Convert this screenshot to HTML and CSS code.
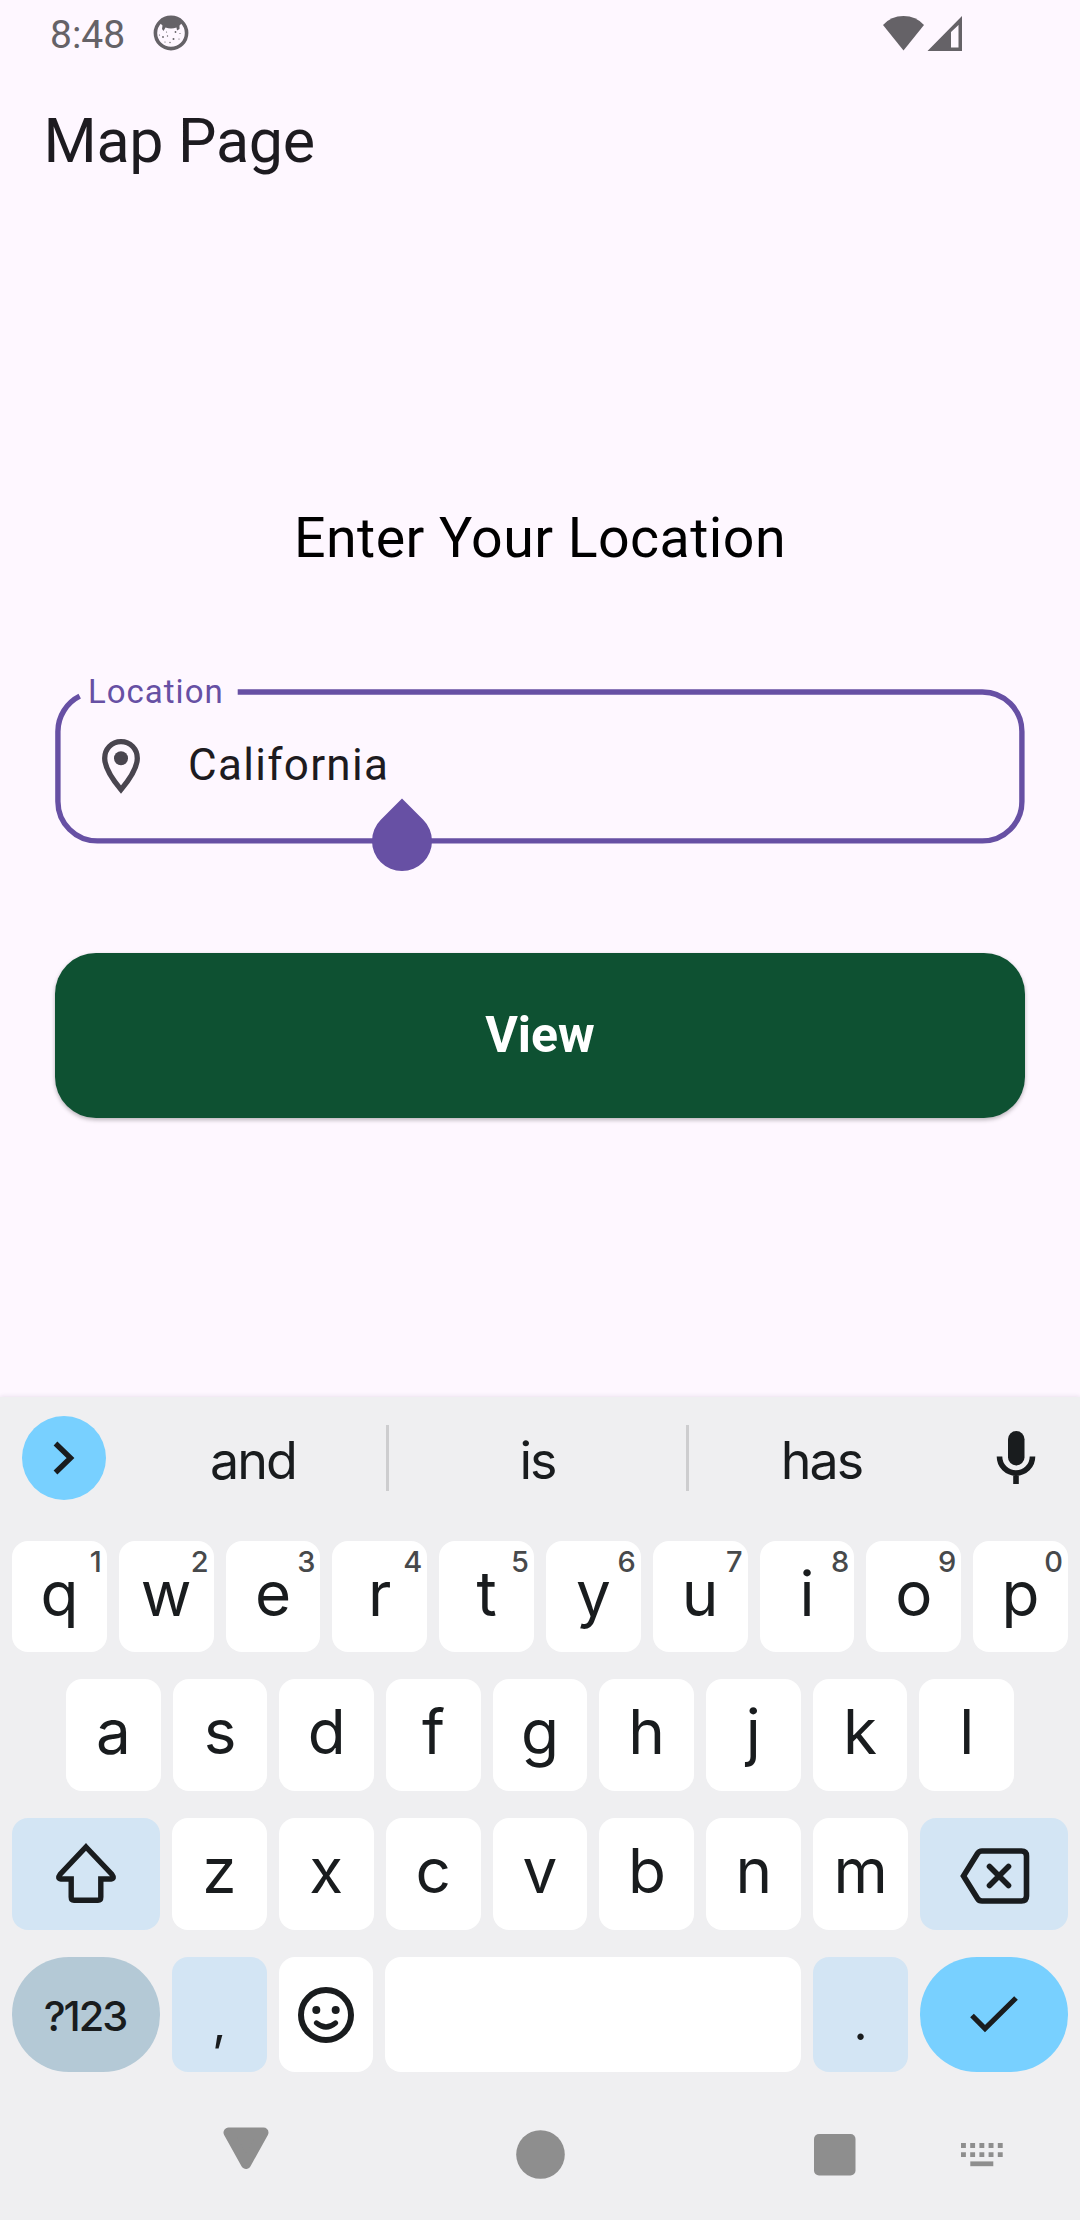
FILE: index.html

```html
<!DOCTYPE html>
<html lang="en">
<head>
<meta charset="utf-8">
<title>Map Page</title>
<link rel="stylesheet" href="styles.css">
</head>
<body>
<div class="screen">
  <header class="status">
    <span class="clock">8:48</span>
    <svg class="face" width="36" height="36" viewBox="0 0 36 36"><circle cx="18" cy="18" r="15.6" fill="none" stroke="currentColor" stroke-width="3.6"/><path d="M7 8Q18-2 29 8L26.5 10.5L26.5 14L24 15.5L23.5 12.5Q18 14.5 12.5 12.5L10.5 16L9 14L9.5 10.5Z" fill="currentColor"/><g fill="currentColor"><circle cx="10" cy="22" r=".9"/><circle cx="13.5" cy="17" r=".6"/><circle cx="22.5" cy="17" r=".9"/><circle cx="20.5" cy="24" r="1"/><circle cx="14.5" cy="21" r=".7"/><circle cx="26" cy="24" r=".6"/><circle cx="12" cy="27" r=".6"/><circle cx="17" cy="27.5" r=".7"/><circle cx="27" cy="18.5" r=".6"/><circle cx="6.5" cy="20" r=".6"/></g></svg>
    <svg class="signals" width="80" height="36" viewBox="0 0 80 36" fill="currentColor"><path d="M0 10Q8 1 20.5 1T41 10L20.5 35.500Z"/><path fill-rule="evenodd" d="M44.5 36L79 1V36ZM68 17V32.5H75.5V10Z"/></svg>
  </header>
  <h1 class="title">Map Page</h1>
  <main class="form">
    <h2 class="heading">Enter Your Location</h2>
    <div class="field">
      <svg class="outline" width="970" height="155" viewBox="0 0 970 155"><path d="M24.7 7.200A39.5 39.5 0 0 0 2.9 42.400V112.400A39.5 39.5 0 0 0 42.4 151.900H927.400A39.5 39.5 0 0 0 966.9 112.400V42.400A39.5 39.5 0 0 0 927.4 3H182.700" fill="none" stroke="currentColor" stroke-width="5.4"/></svg>
      <span class="label">Location</span>
      <svg class="pin" width="38" height="55" viewBox="0 0 38 55"><path d="M19 2.700C9.5 2.7 2.7 10 2.7 19.200C2.7 29 10.5 40.5 19 50.600C27.5 40.5 35.3 29 35.3 19.200C35.3 10 28.5 2.7 19 2.700Z" fill="none" stroke="currentColor" stroke-width="5.3"/><circle cx="19" cy="19.3" r="7" fill="currentColor"/></svg>
      <span class="value">California</span>
      <svg class="handle" width="60" height="74" viewBox="0 0 60 74"><path d="M30 .5L51.2 21.800A30 30 0 1 1 8.8 21.800Z" fill="currentColor"/></svg>
    </div>
    <button class="view">View</button>
  </main>
  <section class="keyboard">
    <div class="suggest">
      <span class="expand"><svg width="22" height="34" viewBox="0 0 22 34"><path d="M2.5 2.500L17.5 17L2.5 31.500" fill="none" stroke="currentColor" stroke-width="5.4"/></svg></span>
      <span class="word lead">and</span><i class="rule"></i><span class="word">is</span><i class="rule"></i><span class="word">has</span>
      <svg class="mic" width="40" height="54" viewBox="0 0 40 54"><rect x="12" y="0" width="16.5" height="34.5" rx="8.25" fill="currentColor"/><path d="M3.5 25.500C3.5 35 11 42 20 42S36.5 35 36.5 25.500M20 42V53" fill="none" stroke="currentColor" stroke-width="5.6"/></svg>
    </div>
    <div class="row first">
      <span class="key">q<sup>1</sup></span><span class="key">w<sup>2</sup></span><span class="key">e<sup>3</sup></span><span class="key">r<sup>4</sup></span><span class="key">t<sup>5</sup></span><span class="key">y<sup>6</sup></span><span class="key">u<sup>7</sup></span><span class="key">i<sup>8</sup></span><span class="key">o<sup>9</sup></span><span class="key">p<sup>0</sup></span>
    </div>
    <div class="row second">
      <span class="key">a</span><span class="key">s</span><span class="key">d</span><span class="key">f</span><span class="key">g</span><span class="key">h</span><span class="key">j</span><span class="key">k</span><span class="key">l</span>
    </div>
    <div class="row">
      <span class="key wide tint"><svg class="shift" width="62" height="61" viewBox="0 0 62 61"><path d="M31 4L57 31.500Q60 35.5 56 36H45.800V54Q45.8 57.2 43 57.200H19Q16.2 57.2 16.2 54V36H6Q2 35.5 5 31.500Z" fill="none" stroke="currentColor" stroke-width="5.4"/></svg></span>
      <span class="key">z</span><span class="key">x</span><span class="key">c</span><span class="key">v</span><span class="key">b</span><span class="key">n</span><span class="key">m</span>
      <span class="key wide tint"><svg class="erase" width="70" height="56" viewBox="0 0 70 56"><path d="M3.5 28L17.5 5.500Q19 3 22 3H61.500Q66.5 3 66.5 8V48Q66.5 53 61.5 53H22Q19 53 17.5 50.500Z" fill="none" stroke="currentColor" stroke-width="5.6"/><path d="M29.5 18.500L48.5 37.500M48.5 18.500L29.5 37.500" fill="none" stroke="currentColor" stroke-width="5.6" stroke-linecap="round"/></svg></span>
    </div>
    <div class="row last">
      <span class="key wide symbols">?123</span>
      <span class="key tint mark">,</span>
      <span class="key"><svg class="smile" width="56" height="56" viewBox="0 0 56 56"><circle cx="28" cy="28" r="25" fill="none" stroke="currentColor" stroke-width="6"/><circle cx="18.3" cy="23" r="4" fill="currentColor"/><circle cx="37.7" cy="23" r="4" fill="currentColor"/><path d="M18.5 36Q28 44 37.5 36" fill="none" stroke="currentColor" stroke-width="5.2" stroke-linecap="round"/></svg></span>
      <span class="key space"></span>
      <span class="key tint mark">.</span>
      <span class="key wide enter"><svg width="48" height="37" viewBox="0 0 48 37"><path d="M2 19.500L15 32.500L46 2" fill="none" stroke="currentColor" stroke-width="5.2"/></svg></span>
    </div>
    <nav class="nav">
      <svg class="back" width="48" height="43" viewBox="0 0 48 43"><path d="M6.5 5.500H41.500L24 37Z" fill="currentColor" stroke="currentColor" stroke-width="10" stroke-linejoin="round"/></svg>
      <svg class="home" width="49" height="49" viewBox="0 0 49 49"><circle cx="24.5" cy="24.5" r="24.3" fill="currentColor"/></svg>
      <svg class="recent" width="42" height="42" viewBox="0 0 42 42"><rect width="41.5" height="41.5" rx="5" fill="currentColor"/></svg>
      <svg class="switch" width="42" height="24" viewBox="0 0 42 24"><path d="M0 2.500H42M0 11.700H42" stroke="currentColor" stroke-width="4.8" stroke-dasharray="4.9 4.3"/><path d="M9.3 20.800H32.300" stroke="currentColor" stroke-width="4.8"/></svg>
    </nav>
  </section>
</div>
</body>
</html>
```

FILE: styles.css

```css
* { box-sizing: border-box; margin: 0; padding: 0; }
svg { display: block; flex: none; }
body { background: #fef7ff; }
.screen {
  width: 1080px; height: 2220px; display: flex; flex-direction: column;
  font-family: Roboto, sans-serif; color: #1d1b20; overflow: hidden;
}
.status { height: 69px; display: flex; align-items: center; padding: 0 117px 3px 50px; color: #656267; }
.clock { font-size: 39px; line-height: 69px; padding-top: 5px; width: 103px; }
.signals { margin-left: auto; }
.title { font-size: 61px; font-weight: 400; line-height: 144px; letter-spacing: -.3px; padding-left: 43.5px; }
.form { flex: 1; padding: 293px 55px 0; display: flex; flex-direction: column; }
.heading { font-size: 55.5px; font-weight: 400; line-height: 66px; letter-spacing: .45px; color: #000; text-align: center; }
.field { position: relative; height: 155px; margin-top: 117px; display: flex; align-items: center; padding-left: 47px; }
.outline { position: absolute; inset: 0; color: #6750a4; }
.label { position: absolute; left: 33px; top: -19px; font-size: 33px; line-height: 44px; letter-spacing: 1px; color: #6750a4; }
.pin { color: #49454f; }
.value { font-size: 44px; line-height: 52px; letter-spacing: 1.3px; margin-left: 48px; padding-bottom: 4px; }
.handle { position: absolute; left: 317px; top: 109px; color: #6750a4; }
.view {
  margin-top: 109px; height: 165px; border: 0; border-radius: 41px; background: #0e5132; color: #fff;
  font: 700 50px/60px Roboto, sans-serif; padding-bottom: 2px; box-shadow: 0 2px 4px rgba(0, 0, 0, .28);
}
.keyboard {
  height: 823px; background: #efeff1; color: #191c1e; font-family: Inter, sans-serif;
  display: flex; flex-direction: column; box-shadow: 0 -1px 4px rgba(80, 50, 100, .1);
}
.suggest {
  height: 144px; padding: 0 44px 22px 22px; display: grid; align-items: center;
  grid-template-columns: 84px 280px 3px 297px 3px 265px 1fr;
}
.expand { width: 84px; height: 84px; border-radius: 50%; background: #78d0ff; display: flex; align-items: center; justify-content: center; }
.word { text-align: center; font-size: 52px; line-height: 60px; letter-spacing: -2px; padding-top: 5px; }
.lead { padding-left: 14px; }
.rule { width: 3px; height: 66px; background: #cdcdcf; }
.mic { justify-self: end; }
.row { height: 112px; display: flex; gap: 12px; padding: 0 12px; margin-bottom: 27px; }
.first { height: 111px; }
.second { padding: 0 66px; }
.key {
  position: relative; flex: 1; border-radius: 16px; background: #fff; display: flex;
  align-items: center; justify-content: center; font-size: 62px; line-height: 72px; padding-bottom: 6px;
}
.key sup { position: absolute; right: 5px; top: 8px; font-size: 29px; line-height: 26px; font-weight: 500; color: #47494b; }
.wide { flex: none; width: 148px; }
.tint { background: #d3e5f4; }
.shift { margin-top: 4px; }
.erase { margin: 10px 0 0 2px; }
.last { height: 115px; margin-bottom: 0; }
.last .key { padding-bottom: 0; }
.symbols, .enter { border-radius: 57px; }
.symbols { background: #b4c9d6; font-size: 41.5px; font-weight: 500; letter-spacing: -2px; padding: 2px 2px 0 0; }
.mark { font-size: 49px; padding-top: 17px; }
.space { flex: 0 0 416px; }
.enter { background: #78d0ff; }
.nav { flex: 1; display: flex; align-items: center; padding: 17px 0 0 222px; color: #8e8e8e; }
.back { margin-bottom: 13px; }
.home { margin-left: 245.5px; }
.recent { margin-left: 249.5px; }
.switch { margin-left: 105px; }
```
